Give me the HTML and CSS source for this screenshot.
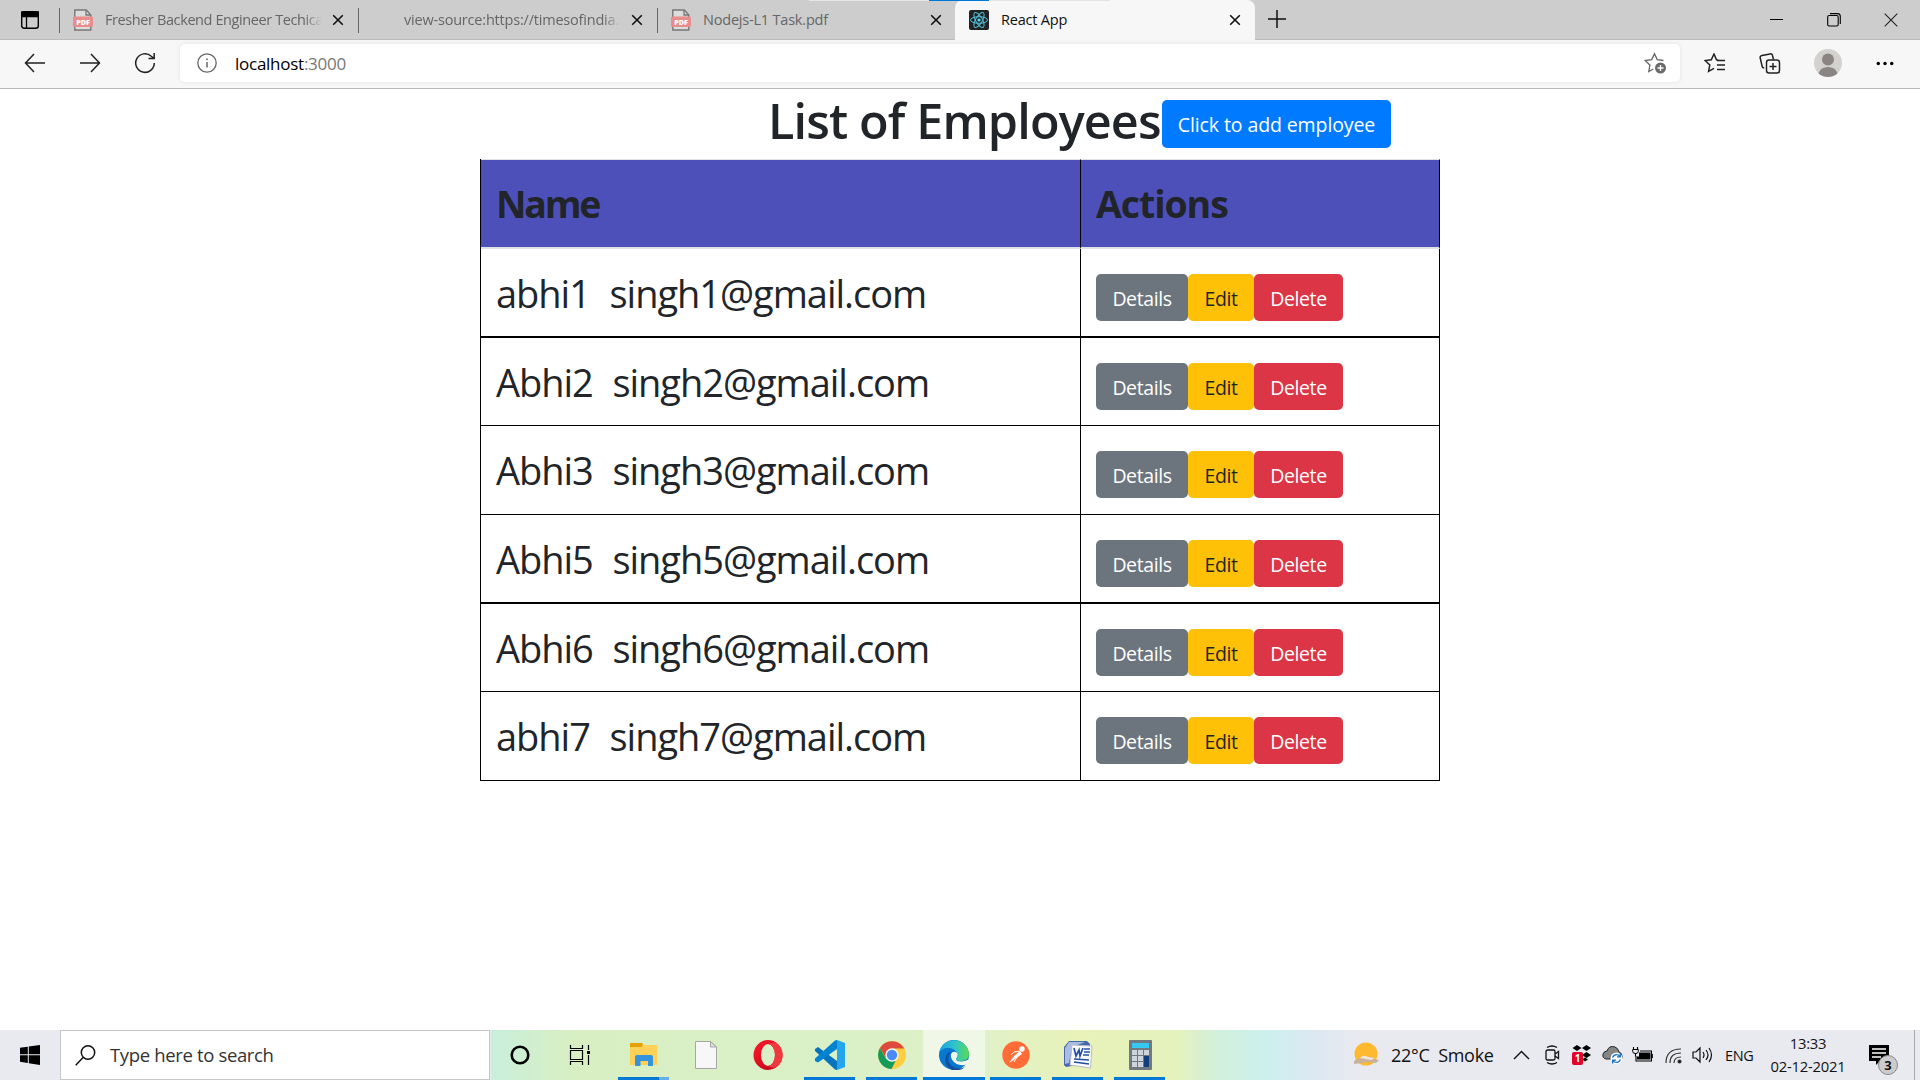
FILE: index.html
```html
<!DOCTYPE html>
<html lang="en"><head><meta charset="utf-8"><title>React App</title><link rel="stylesheet" href="styles.css"></head>
<body>
<header class="tabs">
  <div class="tabmenu"><svg width="20" height="20" viewBox="0 0 20 20"><rect x="1.7" y="1.7" width="16.6" height="16.6" rx="2.5" fill="none" stroke="#000" stroke-width="1.4"/><path d="M1.7 2h16.6v4.5H1.7zM6.5 6v12" stroke="#000" stroke-width="1.3"/></svg></div>
  <div class="tab"><svg class="fav" width="20" height="22"><use href="#pdf"/></svg><span class="title t1">Fresher Backend Engineer Techica</span><svg class="x" width="12" height="12"><use href="#x"/></svg></div>
  <div class="tab"><i class="fav blank"></i><span class="title t2">view-source:https://timesofindia.i</span><svg class="x" width="12" height="12"><use href="#x"/></svg></div>
  <div class="tab third"><svg class="fav" width="20" height="22"><use href="#pdf"/></svg><span class="title t3">Nodejs-L1 Task.pdf</span><svg class="x" width="12" height="12"><use href="#x"/></svg></div>
  <div class="tab active"><svg class="fav" width="20" height="20" viewBox="0 0 20 20"><rect width="20" height="20" rx="2" fill="#222"/><g fill="none" stroke="#53c1de" stroke-width="1"><ellipse cx="10" cy="10" rx="8.5" ry="3.3"/><ellipse cx="10" cy="10" rx="8.5" ry="3.3" transform="rotate(60 10 10)"/><ellipse cx="10" cy="10" rx="8.5" ry="3.3" transform="rotate(120 10 10)"/></g><circle cx="10" cy="10" r="1.6" fill="#61dafb"/></svg><span class="title t4">React App</span><svg class="x" width="12" height="12"><use href="#x"/></svg></div>
  <svg class="plus" width="18" height="18"><path d="M9 0v18M0 9h18" stroke="#111" stroke-width="1.5"/></svg>
  <div class="win">
    <svg width="14" height="14"><path d="M0 6.500h13" stroke="#000"/></svg>
    <svg width="14" height="14" fill="none" stroke="#000" stroke-width="1.1"><rect x=".7" y="2.5" width="10.5" height="10.5" rx="1.5"/><path d="M3 .6h7.5q2.8 0 2.8 2.8V11"/></svg>
    <svg width="14" height="14"><path d="M.7.7l12.6 12.6M13.3.7L.7 13.3" stroke="#222" stroke-width="1.1"/></svg>
  </div>
  <div class="loader"><i></i></div>
</header>
<nav class="bar">
  <div class="nav">
    <svg width="22" height="20"><path d="M21 10H2M10 1L1.5 10l8.500 9" /></svg>
    <svg width="22" height="20"><path d="M1 10h19M12 1l8.500 9L12 19" /></svg>
    <svg width="22" height="22"><path d="M20.300 11a9.300 9.300 0 1 1-3-6.800L20 6.500M20.200 1v5.600h-5.700"/></svg>
  </div>
  <div class="address">
    <svg width="20" height="20" fill="none" stroke="#666" stroke-width="1.3"><circle cx="10" cy="10" r="9.200"/><path d="M10 9v5.500M10 5.500v1.700" stroke-width="1.500"/></svg>
    <span class="url">localhost<b>:3000</b></span>
    <svg class="fave" width="23" height="23" viewBox="0 0 23 23"><path d="M19.500 8.500l-6.300-.9L10.500 1.700 7.700 7.600l-6.500.9 4.700 4.500-1.100 6.500 4.500-2.500" fill="none" stroke="#666" stroke-width="1.300"/><circle cx="16.500" cy="16" r="5.500" fill="#6a6a6a"/><path d="M16.500 13v6M13.500 16h6" stroke="#fff" stroke-width="1.300"/></svg>
  </div>
  <div class="tools">
    <svg width="22" height="20" viewBox="0 0 22 20" fill="none" stroke="#222" stroke-width="1.500"><path d="M14.500 7.200L12.500 6.800 10 1 7.300 6.800 1.200 7.500l4.600 4.400-1.200 6.500 5.400-3M13 7.500h8M13 12h8M13 16.500h8"/></svg>
    <svg width="22" height="21" viewBox="0 0 22 21" fill="none" stroke="#222" stroke-width="1.500"><rect x="7.500" y="7" width="13" height="13" rx="2.500"/><path d="M14 10v7M10.500 13.500h7M14.500 6.500l-1-4q-.4-2-2.400-1.600L3 2.500Q.7 3 1.200 5l2 8.500q.3 1.400 2 1.500"/></svg>
    <svg width="28" height="28"><circle cx="14" cy="14" r="14" fill="#d4d2cf"/><circle cx="14" cy="10.500" r="6" fill="#8a8582"/><path d="M4.500 24.200Q7 18 14 18t9.500 6.200A14 14 0 0 1 4.500 24.200z" fill="#8a8582"/></svg>
    <svg width="18" height="5"><circle cx="2.300" cy="2.500" r="1.700"/><circle cx="9" cy="2.500" r="1.700"/><circle cx="15.700" cy="2.500" r="1.700"/></svg>
  </div>
</nav>
<main>
  <div class="heading"><h1>List of Employees</h1><button class="btn add">Click to add employee</button></div>
  <table>
    <thead><tr><th class="name">Name</th><th>Actions</th></tr></thead>
    <tbody>
    <tr class="thick"><td><span>abhi1&nbsp; singh1@gmail.com</span></td><td><div class="acts"><button class="btn gray">Details</button><button class="btn gold">Edit</button><button class="btn red">Delete</button></div></td></tr>
    <tr class="short"><td><span>Abhi2&nbsp; singh2@gmail.com</span></td><td><div class="acts"><button class="btn gray">Details</button><button class="btn gold">Edit</button><button class="btn red">Delete</button></div></td></tr>
    <tr><td><span>Abhi3&nbsp; singh3@gmail.com</span></td><td><div class="acts"><button class="btn gray">Details</button><button class="btn gold">Edit</button><button class="btn red">Delete</button></div></td></tr>
    <tr class="thick"><td><span>Abhi5&nbsp; singh5@gmail.com</span></td><td><div class="acts"><button class="btn gray">Details</button><button class="btn gold">Edit</button><button class="btn red">Delete</button></div></td></tr>
    <tr class="short"><td><span>Abhi6&nbsp; singh6@gmail.com</span></td><td><div class="acts"><button class="btn gray">Details</button><button class="btn gold">Edit</button><button class="btn red">Delete</button></div></td></tr>
    <tr><td><span>abhi7&nbsp; singh7@gmail.com</span></td><td><div class="acts"><button class="btn gray">Details</button><button class="btn gold">Edit</button><button class="btn red">Delete</button></div></td></tr>
    </tbody>
  </table>
</main>
<footer class="taskbar">
  <div class="start"><svg width="20" height="20"><path d="M0 2.800L7.800 1.700V9.300H0zM8.800 1.500L20 0v9.300H8.800zM0 10.300h7.800v7.600L0 16.800zM8.800 10.300H20V20L8.800 18.300z"/></svg></div>
  <div class="search"><svg width="21" height="21" fill="none" stroke="#111" stroke-width="1.500"><circle cx="13" cy="7.500" r="6.700"/><path d="M8.300 12.300L.700 20.300"/></svg><span>Type here to search</span></div>
  <div class="apps">
    <div class="app"><svg width="20" height="20"><circle cx="10" cy="10" r="8.300" fill="none" stroke="#000" stroke-width="2.600"/></svg></div>
    <div class="app view"><svg width="22" height="20" fill="none" stroke="#000" stroke-width="1.200"><path d="M1.500 0v3.500h12V0M1.500 20v-3.500h12V20M1.500 5.500h12v9h-12zM19.500 0v5M19.500 10v10"/><path d="M18 6h3v3h-3z" fill="#000" stroke="none"/></svg></div>
    <div class="app run files"><svg width="28" height="24"><path d="M0 1q0-1 1-1h11l2 2h12.500q1 0 1 1v18q0 1-1 1H0z" fill="#ffd257"/><path d="M0 1q0-1 1-1h11l1 1-1.500 3H0z" fill="#e5a100"/><path d="M5 23V14q0-2 2-2h14q2 0 2 2v9h-5v-5h-7.500v5z" fill="#3393dc"/></svg></div>
    <div class="app"><svg width="22" height="28"><path d="M.5.500h15L21.500 6v21.500H.5z" fill="#f7f7f9" stroke="#a6a6a6"/><path d="M15.500.500V6h6z" fill="#ddd" stroke="#a6a6a6"/></svg></div>
    <div class="app"><svg width="30" height="30"><defs><linearGradient id="op" x2="1" y2="1"><stop stop-color="#ff1b2d"/><stop offset="1" stop-color="#b80012"/></linearGradient></defs><path d="M15 0a14.500 15 0 1 0 0 30a14.500 15 0 1 0 0-30zm0 4a7 11 0 1 1 0 22a7 11 0 1 1 0-22z" fill="url(#op)" fill-rule="evenodd"/><path d="M15 4a7 11 0 0 1 0 22q6 4 11-1A14.500 15 0 0 0 23 2.500Q18 2 15 4z" fill="#f0393e"/></svg></div>
    <div class="app run"><svg width="30" height="30"><path d="M22 0l8 3v24l-8 3z" fill="#24a5ee"/><path d="M22 21L3 7 0 9v2l20 18.500 2 .5z" fill="#0873bd"/><path d="M22 9L3 22.500 0 21v-2.500L20 .5 22 0z" fill="#0084d1"/></svg></div>
    <div class="app run"><svg width="28" height="28"><circle cx="14" cy="14" r="14" fill="#ffcd40"/><path d="M2 7A14 14 0 0 1 26.300 7.500H14L8 17z" fill="#dc4b3e"/><path d="M1.900 7L8 17.500l9.500 2.500-4 8A14 14 0 0 1 1.900 7z" fill="#169a5a"/><circle cx="14" cy="14" r="6.700" fill="#f3f6ee"/><circle cx="14" cy="14" r="5.200" fill="#4c8bf5"/></svg></div>
    <div class="app run current"><svg width="30" height="30"><defs><linearGradient id="ed"><stop stop-color="#1aa4e8"/><stop offset=".55" stop-color="#31c5c9"/><stop offset="1" stop-color="#5bdb49"/></linearGradient></defs><circle cx="15" cy="15" r="15" fill="#0877cf"/><path d="M.3 12.500A15 15 0 0 1 30 14q0 7-8 7-5 0-5-2 2-1.500 1.500-4Q17.500 9 10 8 3 7.500.3 12.500z" fill="url(#ed)"/><path d="M12 12q-6 8 1 14 7 5 14 0A15 15 0 0 1 13 30Q4 25 7 16q2-4 5-4z" fill="#11509a"/><path d="M12 14q2-3.500 5.500-1.500 2.500 2.500-.5 6.500 0 2.500 5 2.500 4 0 8.500-2.500-1 4-3 5.500-5.500 1.500-10-.5Q11 20 12 14z" fill="#f0f7e6"/></svg></div>
    <div class="app run"><svg width="28" height="28"><circle cx="14" cy="14" r="13.700" fill="#ff6c37"/><circle cx="20" cy="8" r="2.700" fill="#fff"/><path d="M18 10l2 3-5.500 4L7 22l5-7z" fill="#fff"/><path d="M18 10l-6 1-3 3M15 16l-3 5" stroke="#fff" fill="none"/></svg></div>
    <div class="app run"><svg width="29" height="30"><path d="M5 1h18l3 3v19L2 27 0 25V7z" fill="#4768ad"/><path d="M5 2h16L8 7 5 23l-4 1V8z" fill="#a9bce1"/><path d="M8 5l20 1-1.500 22L6 25z" fill="#fafcff" stroke="#bbc"/><path d="M10 8l2 8 3-6 1 6 3-8M20 9h6M20 12h6M19 15h6M10 19l15 1M10 22l15 2" stroke="#2450a0" stroke-width="1.700" fill="none"/></svg></div>
    <div class="app run"><svg width="23" height="30"><rect width="23" height="30" rx="1" fill="#707981"/><path d="M3 3h17v5H3z" fill="#36c8f4"/><path d="M3 10h5v5H3zm6 0h5v5H9zm6 0h5v5h-5zM3 16h5v5H3zm6 0h5v5H9zM3 22h5v5H3zm6 0h5v5H9z" fill="#cdd4dc"/><path d="M15 16h5v11h-5z" fill="#123f7b"/></svg></div>
  </div>
  <div class="tray">
    <svg class="weather" width="28" height="26"><circle cx="14" cy="12" r="11.500" fill="#ffb92e"/><path d="M2 19q4-3 6-2 2-5 8-2 4-1 6 2l5 1-3 3-8-1-6 1-8 1z" fill="#c9b19b"/><path d="M8 16q3-4 8-1l7 1-4 2z" fill="#f1e5d8"/></svg>
    <span class="temp">22°C&nbsp; Smoke</span>
    <svg class="chev" width="17" height="10"><path d="M1 9l7.500-7.500L16 9" fill="none" stroke="#111" stroke-width="1.400"/></svg>
    <svg class="meet" width="15" height="20" fill="none" stroke="#111" stroke-width="1.300"><rect x="1" y="5" width="9" height="10" rx="1.500"/><path d="M10 9l3.500-2.500v7L10 11M2 2.500q5-3 10 0M2 17.500q5 3 10 0"/></svg>
    <div class="drop"><svg width="19" height="20"><path d="M5 0l4.500 3L5 6 .5 3zM14.500 0L19 3l-4.500 3L10 3zM14.500 7l4.500 3-4.500 3L10 10zM10 14.500l3-2 3 2-3 2z"/></svg><b>1</b></div>
    <svg class="cloud" width="21" height="20"><path d="M4 14q-4-1-3-5 1-3 4-3 2-6 8-4 3 1 4 5 3 1 3 4v3H4z" fill="#858585" stroke="#222"/><circle cx="14.500" cy="13.500" r="6" fill="#fff"/><path d="M10.500 12.500q2-4 6-2.500l1.500 1.500M18.500 14.500q-2 4-6 2.500L11 15.500M18.300 8.500v3.300H15M10.700 18.500v-3.300H14" fill="none" stroke="#1673c4" stroke-width="1.300"/></svg>
    <svg class="batt" width="21" height="16"><path d="M7 5.500h11.500v7H5v-3h2z"/><path d="M8 4h11.500v10H4V9M20.300 7v4M1.500 0v2.500M5.500 0v2.500M3.500 6v3.500" fill="none" stroke="#000" stroke-width="1.100"/><path d="M.7 2.500h5.600v2q0 2-2.800 2t-2.800-2z" fill="none" stroke="#000"/></svg>
    <svg class="wifi" width="17" height="17" fill="none" stroke="#333" stroke-width="1.200"><path d="M1 16Q1 2 16 2M5 16Q5 6 16 6M9 16q0-6 7-6"/><circle cx="14.500" cy="14.500" r="1.500" fill="#111"/></svg>
    <svg class="vol" width="21" height="18" fill="none" stroke="#111" stroke-width="1.200"><path d="M1 6h3l4-4v14l-4-4H1zM11 6q2 3 0 6M14 4q4 5 0 10M17 2q5 7 0 14"/></svg>
    <span class="eng">ENG</span>
    <div class="clock"><span>13:33</span><span class="date">02-12-2021</span></div>
    <div class="note"><svg width="21" height="20"><path d="M0 0h20v16h-9l-4 4v-4H0z"/><path d="M3 4h14M3 8h14M3 12h9" stroke="#fff" stroke-width="1.400"/></svg><b>3</b></div>
    <i class="edge"></i>
  </div>
</footer>
<svg width="0" height="0" class="defs"><defs>
<symbol id="x" viewBox="0 0 12 12"><path d="M1.200 1.200l9.600 9.600M10.800 1.200l-9.600 9.600" stroke="#111" stroke-width="1.600"/></symbol>
<symbol id="pdf" viewBox="0 0 20 22"><path d="M1.800 7V1h11.500l4.500 5v15H1.800z" fill="#ddd" stroke="#777" stroke-width="1.400"/><path d="M13 1v5h5" fill="none" stroke="#777" stroke-width="1.300"/><rect x="0" y="7.500" width="20" height="10.500" rx="1.500" fill="#e88c8c"/><text x="10" y="15.500" font-family="Open Sans,sans-serif" font-weight="800" font-size="7.200" text-anchor="middle" fill="#fff">PDF</text></symbol>
</defs></svg>
</body></html>
```
FILE: styles.css
```css
*{box-sizing:border-box}
body{margin:0;width:1920px;height:1080px;overflow:hidden;background:#fff;font-family:"Open Sans","Noto Sans",sans-serif;color:#212529;display:flex;flex-direction:column}
svg{display:block;flex:none}
.defs{position:absolute}
.tabs{position:relative;height:40px;background:#cdcdcd;border-bottom:1px solid #bbb;display:flex;flex:none}
.tabmenu{width:59px;padding:10px 0 0 20px;flex:none}
.tab{position:relative;width:299px;height:40px;padding:0 14px 0 14px;display:flex;align-items:center;flex:none}
.tab:not(.active)::before{content:"";position:absolute;left:0;top:8px;height:25px;width:1px;background:#666}
.tab.third{width:298px}
.tab.third .x{margin-right:-1px}
.tab.active{width:300px;background:#f7f7f7;border-radius:8px 8px 0 0}
.fav{width:20px;flex:none}
.title{flex:1;margin-left:12px;overflow:hidden;white-space:nowrap;font-size:14.500px;line-height:20px;color:#666;height:20px;letter-spacing:-.2px;margin-top:-1px}
.t1{letter-spacing:-.4px}
.t1,.t2{-webkit-mask-image:linear-gradient(90deg,#000 92%,transparent);mask-image:linear-gradient(90deg,#000 92%,transparent)}
.t4{color:#111}
.x{margin-left:10px}
.plus{margin:10px 0 0 13px}
.win{margin:13px 22px 0 auto;display:flex;gap:43px}
.loader{position:absolute;left:809px;top:0;width:301px;height:1px;background:#e5e5e5;display:flex;padding-left:120px}
.loader i{width:60px;background:#0078d7}
.bar{height:49px;background:#f7f7f7;border-bottom:1px solid #b9b9b9;display:flex;align-items:center;flex:none;padding-bottom:2px}
.nav{width:180px;padding-left:24px;display:flex;align-items:center;gap:33px;fill:none;stroke:#222;stroke-width:1.500}
.address{width:1500px;height:38px;background:#fff;border-radius:5px;box-shadow:0 0 4px #e2e2e2;display:flex;align-items:center;padding:0 13px 0 17px}
.url{margin-left:18px;font-size:17px;color:#000;letter-spacing:-.26px}
.url b{font-weight:400;color:#777}
.fave{margin-left:auto}
.tools{display:flex;align-items:center;flex:1;padding-left:24px}
.tools svg:nth-child(2){margin-left:33px}
.tools svg:nth-child(3){margin-left:33px}
.tools svg:nth-child(4){margin-left:34px}
main{flex:1;padding-top:11px}
.heading{display:flex;padding-left:768px;height:59px}
h1{margin:-8px 0 0;width:394px;font-size:48.500px;line-height:56px;font-weight:600;white-space:nowrap;letter-spacing:-.85px}
.btn{border:0;border-radius:5px;height:47px;padding:0;font:400 19.500px "Open Sans","Noto Sans",sans-serif;color:#fff;text-align:center;white-space:nowrap;letter-spacing:-.4px}
.add{background:#007bff;width:229px;height:48px;letter-spacing:-.1px;padding-top:1px}
table{width:960px;margin-left:480px;border-collapse:separate;border-spacing:0;table-layout:fixed;border-left:1px solid #000}
th{height:90px;background:#4e50b9;border-top:1px solid #dee2e6;border-bottom:2px solid #dee2e6;border-right:1px solid #000;padding:1px 0 0 16px;text-align:left;font-size:37.500px;line-height:50px;font-weight:700;letter-spacing:-1.1px}
th:first-child{width:600px}
th.name{letter-spacing:-2.200px;padding-left:15px}
th:last-child,td:last-child{padding-left:15px}
td{height:89px;border-bottom:1px solid #000;border-right:1px solid #000;padding:0 0 0 15px;font-size:38px;line-height:50px;white-space:nowrap}
.thick td{border-bottom-width:2px}
.short td{height:88px}
td span{letter-spacing:-1.030px;word-spacing:1px}
.acts{display:flex;padding-top:9px}
.acts .btn{padding-top:2px}
.thick .acts{padding-top:10px}
.gray{background:#6c757d;width:92px}.gold{background:#ffc107;color:#212529;width:66px}.red{background:#dc3545;width:89px}
.taskbar{height:50px;flex:none;display:flex;background:linear-gradient(90deg,#e9eaf0 0 490px,#c9eedb 492px,#d8efc3 570px,#daf0c7 850px,#dff1ca 970px,#e8f2b9 1080px,#e5f2bd 1175px,#d1efdc 1220px,#cdf0ef 1270px,#dce8f3 1310px,#e9eaf0 1360px)}
.start{width:60px;padding:15px 0 0 20px}
.search{width:430px;border:1px solid #c7c7c7;background:#fff;display:flex;align-items:center;padding-left:14px;font-size:18.500px;color:#333}
.search span{margin:-2px 0 0 14px;letter-spacing:-.35px}
.apps{display:flex;width:680px;margin-left:-1px}
.app{width:62px;flex:none;height:50px;display:flex;align-items:center;justify-content:center;position:relative}
.view{padding-right:4px}
.run::after{content:"";position:absolute;left:5px;right:6px;bottom:0;height:3px;background:#0078d7}
.current{background:#f0f7e6}
.current::after{left:0;right:0}
.files::after{background:linear-gradient(90deg,#0078d7 41px,#68aee8 41px)}
.tray{flex:1;display:flex;align-items:center;padding-left:183px;color:#111;white-space:nowrap}
.temp{font-size:18px;margin-left:11px;width:104px;letter-spacing:-.3px}
.chev{margin-left:18px}.meet{margin-left:15px}
.drop{position:relative;margin-left:12px}
.drop b{position:absolute;left:0;top:7px;width:11px;height:13px;background:#e3002b;color:#fff;font-size:10px;line-height:13px;text-align:center;border-radius:2px}
.cloud{margin-left:11px}.batt{margin-left:9px}.wifi{margin-left:12px}.vol{margin-left:10px}
.eng{font-size:14.500px;margin-left:12px;width:29px;letter-spacing:-.4px}
.clock{display:flex;flex-direction:column;align-items:center;width:76px;margin-left:16px;font-size:14.800px;line-height:23px;letter-spacing:-.2px}
.note{position:relative;margin-left:23px}
.note b{position:absolute;left:9px;top:10px;width:20px;height:20px;border:1px solid #888;border-radius:50%;background:#ccc;font-size:13px;line-height:18px;text-align:center}
.edge{width:1px;height:50px;background:#aaa;margin-left:auto;margin-right:5px}
```
